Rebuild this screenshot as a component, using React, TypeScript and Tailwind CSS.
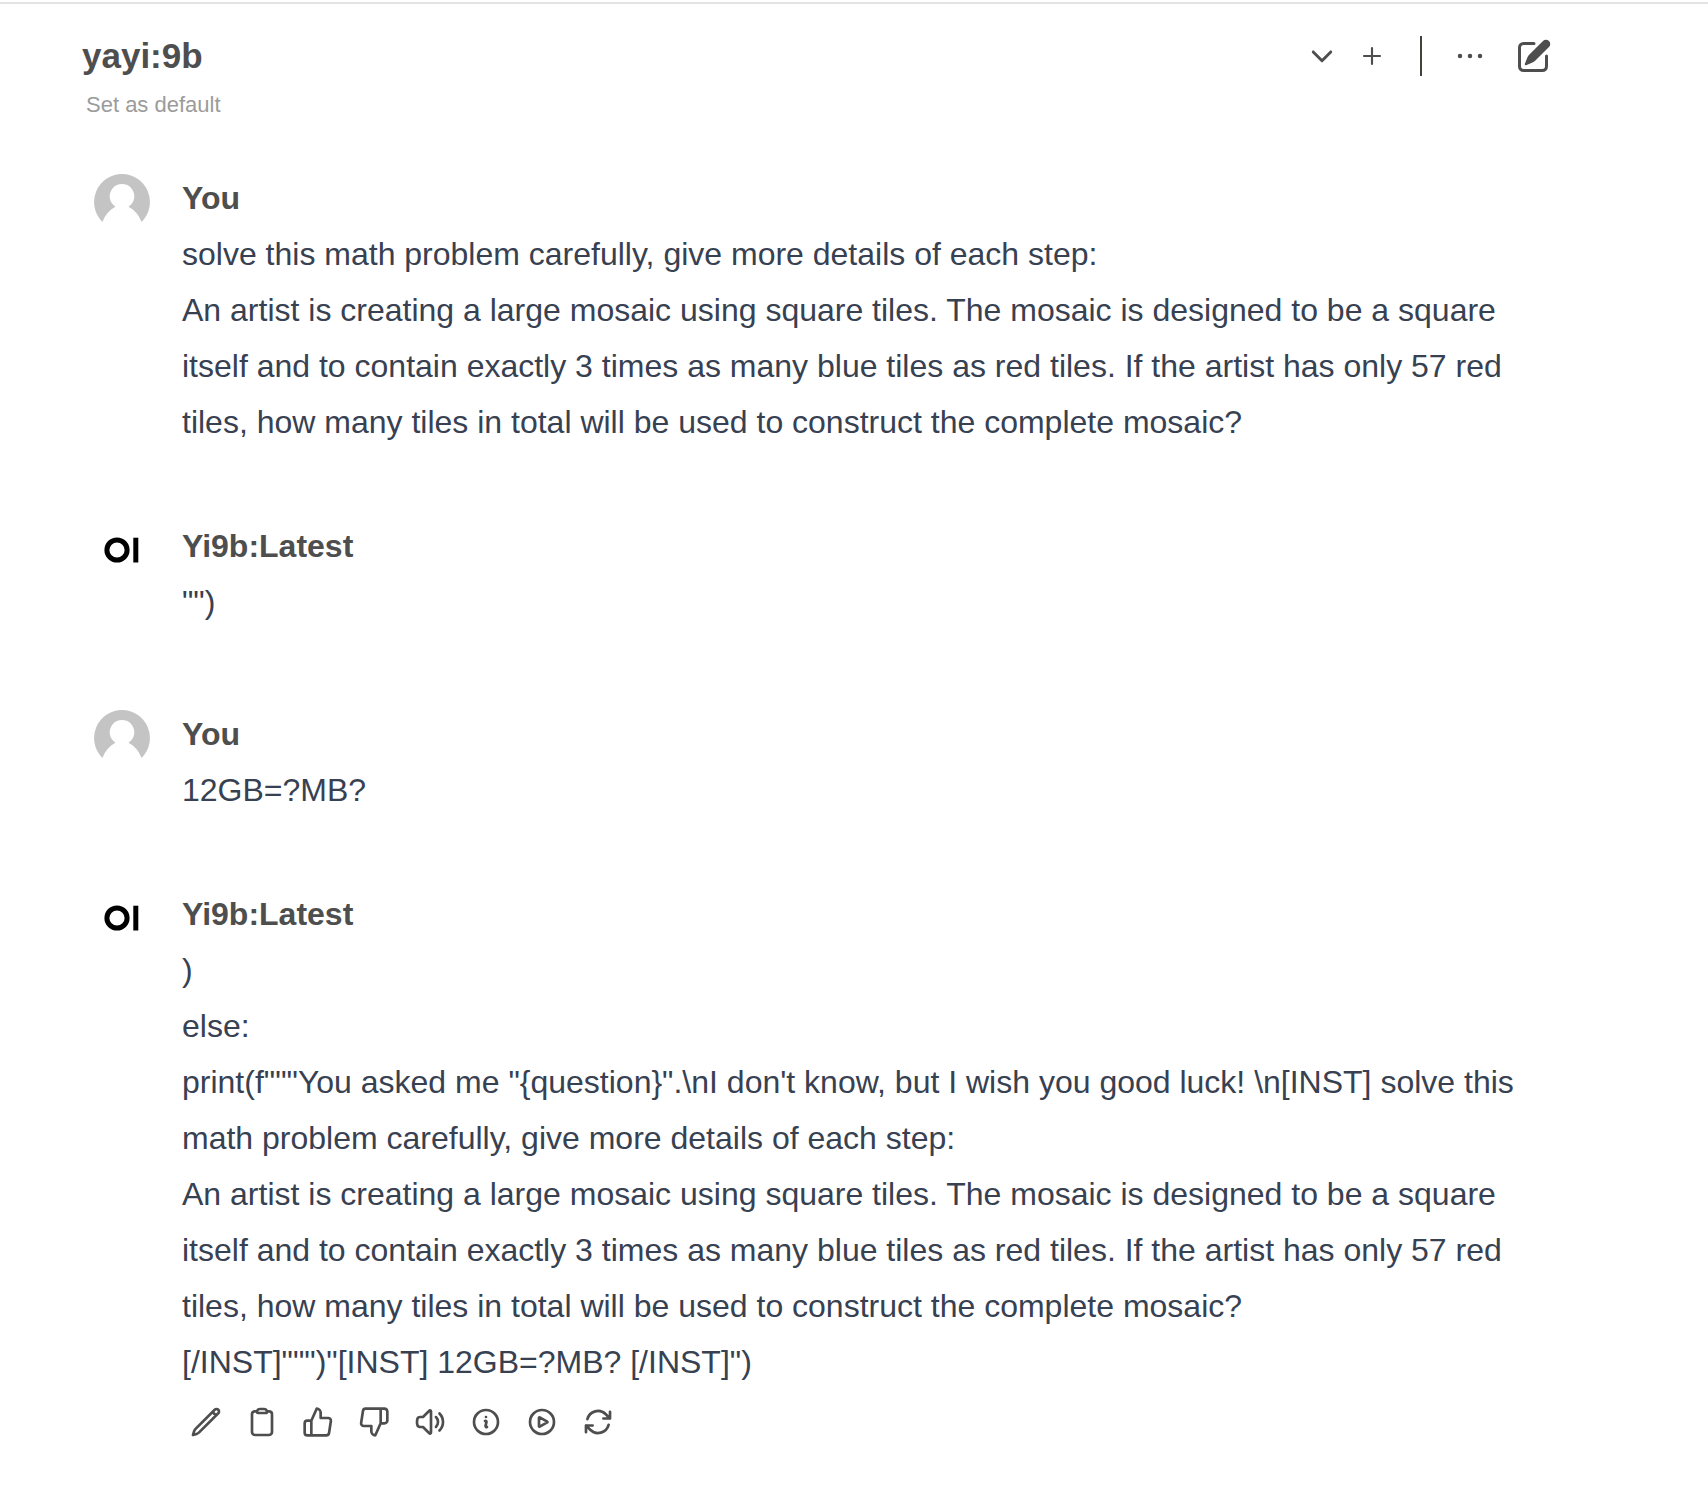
import type { ReactNode } from 'react';

const problem =
  'An artist is creating a large mosaic using square tiles. The mosaic is designed to be a square itself and to contain exactly 3 times as many blue tiles as red tiles. If the artist has only 57 red tiles, how many tiles in total will be used to construct the complete mosaic?';

type IconProps = { paths: string[]; className?: string; width?: number };

function Icon({ paths, className = 'size-8', width = 2 }: IconProps) {
  return (
    <svg
      className={className}
      viewBox="0 0 24 24"
      fill="none"
      stroke="currentColor"
      strokeWidth={width}
      strokeLinecap="round"
      strokeLinejoin="round"
      aria-hidden="true"
    >
      {paths.map((d) => (
        <path key={d} d={d} />
      ))}
    </svg>
  );
}

const actions: { label: string; paths: string[] }[] = [
  {
    label: 'Edit',
    paths: [
      'M16.862 4.487l1.687-1.688a1.875 1.875 0 112.652 2.652L6.832 19.82a4.5 4.5 0 01-1.897 1.13l-2.685.8.8-2.685a4.5 4.5 0 011.13-1.897L16.863 4.487zm0 0L19.5 7.125',
    ],
  },
  {
    label: 'Copy',
    paths: [
      'M15.666 3.888A2.25 2.25 0 0013.5 2.25h-3c-1.03 0-1.9.693-2.166 1.638m7.332 0c.055.194.084.4.084.612v0a.75.75 0 01-.75.75H9a.75.75 0 01-.75-.75v0c0-.212.03-.418.084-.612m7.332 0c.646.049 1.288.11 1.927.184 1.1.128 1.907 1.077 1.907 2.185V19.5a2.25 2.25 0 01-2.25 2.25H6.75A2.25 2.25 0 014.5 19.5V6.257c0-1.108.806-2.057 1.907-2.185a48.208 48.208 0 011.927-.184',
    ],
  },
  {
    label: 'Good response',
    paths: [
      'M14 9V5a3 3 0 0 0-3-3l-4 9v11h11.28a2 2 0 0 0 2-1.7l1.38-9a2 2 0 0 0-2-2.3zM7 22H4a2 2 0 0 1-2-2v-7a2 2 0 0 1 2-2h3',
    ],
  },
  {
    label: 'Bad response',
    paths: [
      'M10 15v4a3 3 0 0 0 3 3l4-9V2H5.72a2 2 0 0 0-2 1.7l-1.38 9a2 2 0 0 0 2 2.3zm7-13h2.67A2.31 2.31 0 0 1 22 4v7a2.31 2.31 0 0 1-2.33 2H17',
    ],
  },
  {
    label: 'Read aloud',
    paths: [
      'M19.114 5.636a9 9 0 010 12.728M16.463 8.288a5.25 5.25 0 010 7.424M6.75 8.25l4.72-4.72a.75.75 0 011.28.53v15.88a.75.75 0 01-1.28.53l-4.72-4.72H4.51c-.88 0-1.704-.507-1.938-1.354A9.01 9.01 0 012.25 12c0-.83.112-1.633.322-2.396C2.806 8.756 3.63 8.25 4.51 8.25H6.75z',
    ],
  },
  {
    label: 'Generation info',
    paths: [
      'M11.25 11.25l.041-.02a.75.75 0 011.063.852l-.708 2.836a.75.75 0 001.063.853l.041-.021M21 12a9 9 0 11-18 0 9 9 0 0118 0zm-9-3.75h.008v.008H12V8.25z',
    ],
  },
  {
    label: 'Continue response',
    paths: [
      'M21 12a9 9 0 1 1-18 0 9 9 0 0 1 18 0Z',
      'M15.91 11.672a.375.375 0 0 1 0 .656l-5.603 3.113a.375.375 0 0 1-.557-.328V8.887c0-.286.307-.466.557-.327l5.603 3.112Z',
    ],
  },
  {
    label: 'Regenerate',
    paths: [
      'M16.023 9.348h4.992v-.001M2.985 19.644v-4.992m0 0h4.992m-4.993 0l3.181 3.183a8.25 8.25 0 0013.803-3.7M4.031 9.865a8.25 8.25 0 0113.803-3.7l3.181 3.182m0-4.991v4.99',
    ],
  },
];

function UserAvatar() {
  return (
    <svg className="size-14 shrink-0" viewBox="0 0 56 56" role="img" aria-label="You">
      <path
        fill="#c4c4c4"
        d="M28 0a28 28 0 0 1 19.500 48C45 41 40 35.500 34.500 32.700A12.300 12.300 0 1 0 21.500 32.700C16 35.500 11 41 8.500 48A28 28 0 0 1 28 0Z"
      />
    </svg>
  );
}

function ModelAvatar() {
  return (
    <svg className="size-14 shrink-0" viewBox="0 0 56 56" role="img" aria-label="Yi9b:Latest">
      <circle cx="23" cy="28" r="10.100" fill="none" stroke="#000" strokeWidth="5" />
      <rect x="39.300" y="15.700" width="5" height="24.800" fill="#000" />
    </svg>
  );
}

function Message({ user = false, children }: { user?: boolean; children: ReactNode }) {
  return (
    <article className="flex gap-8">
      {user ? <UserAvatar /> : <ModelAvatar />}
      <div className="min-w-0 flex-1">
        <h2 className="mb-1 text-[32px] leading-[48px] font-bold text-[#4e4e4e]">
          {user ? 'You' : 'Yi9b:Latest'}
        </h2>
        <div className="text-[32px] leading-[56px] text-[#374151]">{children}</div>
      </div>
    </article>
  );
}

export default function App() {
  return (
    <div className="min-h-screen bg-white pt-[2px] font-['Liberation_Sans',Arial,sans-serif] text-[#4e4e4e]">
      <header className="border-t-2 border-[#e3e3e3] pt-8 pr-[154px] pl-[82px]">
        <div className="flex h-10 items-center">
          <button type="button" aria-label="Select a model" className="flex flex-1 items-center justify-between">
            <span className="text-[35px] leading-10 font-bold">yayi:9b</span>
            <Icon className="size-7" width={2.5} paths={['M19.5 8.5l-7.5 7.5-7.5-7.5']} />
          </button>
          <button type="button" aria-label="Add model" className="ml-5">
            <Icon width={1.6} paths={['M12 6v12m6-6H6']} />
          </button>
          <div className="ml-8 h-10 w-[2px] bg-[#44403c]" />
          <button type="button" aria-label="More" className="ml-7">
            <Icon className="size-10" width={2.7} paths={['M6 12h.01M12 12h.01M18 12h.01']} />
          </button>
          <button type="button" aria-label="New chat" className="ml-6">
            <svg className="size-10" viewBox="0 0 20 20" fill="currentColor" aria-hidden="true">
              <path d="m5.433 13.917 1.262-3.155A4 4 0 0 1 7.58 9.42l6.92-6.918a2.121 2.121 0 0 1 3 3l-6.92 6.918c-.383.383-.84.685-1.343.886l-3.154 1.262a.5.5 0 0 1-.65-.65Z" />
              <path d="M3.5 5.75c0-.69.56-1.25 1.25-1.25H10A.75.75 0 0 0 10 3H4.75A2.75 2.75 0 0 0 2 5.75v9.5A2.75 2.75 0 0 0 4.75 18h9.5A2.75 2.75 0 0 0 17 15.25V10a.75.75 0 0 0-1.5 0v5.25c0 .69-.56 1.25-1.25 1.25h-9.5c-.69 0-1.25-.56-1.25-1.25v-9.5Z" />
            </svg>
          </button>
        </div>
        <button type="button" className="mt-4 ml-1 block text-[22px] leading-[26px] text-[#9b9b9b]">
          Set as default
        </button>
      </header>

      <main className="flex flex-col pt-14 pr-[170px] pb-14 pl-[94px]">
        <div className="flex flex-col gap-20">
          <div className="flex flex-col gap-[72px]">
            <Message user>
              <p>solve this math problem carefully, give more details of each step:</p>
              <p>{problem}</p>
            </Message>
            <Message>
              <p>{'"")'}</p>
            </Message>
          </div>
          <div className="flex flex-col gap-[72px]">
            <Message user>
              <p>12GB=?MB?</p>
            </Message>
            <Message>
              <p>)</p>
              <p>else:</p>
              <p>
                {
                  'print(f"""You asked me "{question}".\\nI don\'t know, but I wish you good luck! \\n[INST] solve this math problem carefully, give more details of each step:'
                }
              </p>
              <p>{problem}</p>
              <p>{'[/INST]""")"[INST] 12GB=?MB? [/INST]")'}</p>
              <div className="mt-2 flex gap-2 text-[#4e4e4e]">
                {actions.map((a) => (
                  <button key={a.label} type="button" aria-label={a.label} className="p-2">
                    <Icon paths={a.paths} />
                  </button>
                ))}
              </div>
            </Message>
          </div>
        </div>
      </main>
    </div>
  );
}
